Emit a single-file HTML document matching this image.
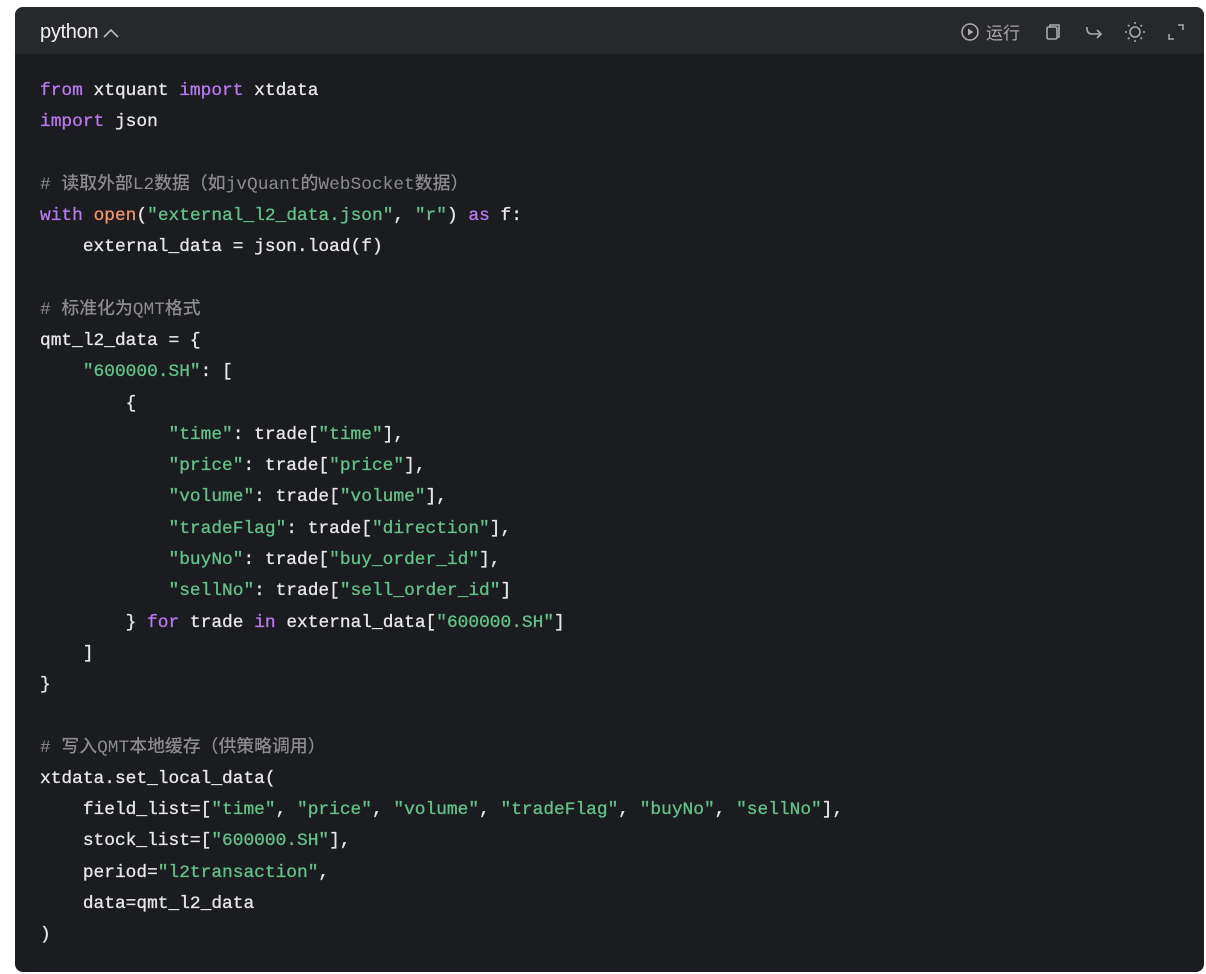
<!DOCTYPE html>
<html><head><meta charset="utf-8"><style>
body{margin:0;background:#fff;width:1206px;height:974px;overflow:hidden}
.box{position:absolute;left:15px;top:7px;width:1189px;height:965px;background:#1b1c20;border-radius:8px;overflow:hidden}
.hd{height:47px;background:#27282c;position:relative}
.lang{position:absolute;left:25px;top:14px;color:#f2f2f2;font:20px "Liberation Sans",sans-serif;letter-spacing:-0.3px}
.lang svg{vertical-align:middle;margin-left:4px}
.tools{position:absolute;right:18px;top:12px;display:flex;align-items:center;color:#a9a9a9;font:17px "Liberation Sans","Noto Sans CJK SC",sans-serif}
.tools svg{display:block}
pre{margin:0;position:absolute;left:25px;top:69px;font:17.85px/31.26px "Liberation Mono","Noto Sans CJK SC",monospace;color:#e8e8e8;font-weight:500;-webkit-text-stroke:0.3px currentColor}
.k{color:#b779f0}.s{color:#63c289}.c{color:#8c8c8c;-webkit-text-stroke:0}.f{color:#f0946c}
</style></head><body><div class="box">
<div class="hd"><div class="lang">python<svg width="18" height="12" viewBox="0 0 18 12"><path d="M2 10L9 3L16 10" fill="none" stroke="#bbb" stroke-width="1.6"/></svg></div>
<div class="tools">
<svg width="20" height="20" viewBox="0 0 20 20"><circle cx="10" cy="10" r="8" fill="none" stroke="#aaa" stroke-width="1.6"/><path d="M8 6.5L13.5 10L8 13.5Z" fill="#aaa"/></svg><span style="margin:0 24px 0 6px">运行</span>
<svg width="18" height="20" viewBox="0 0 18 20" style="margin-right:22px"><rect x="3" y="5" width="10" height="12" rx="1.5" fill="none" stroke="#aaa" stroke-width="1.6"/><path d="M6 5V3h9v12h-2" fill="none" stroke="#aaa" stroke-width="1.6"/></svg>
<svg width="20" height="20" viewBox="0 0 20 20" style="margin-right:20px"><path d="M3 5v2c0 3 2 5 5 5h9M13 8l4 4-4 4" fill="none" stroke="#aaa" stroke-width="1.6"/></svg>
<svg width="22" height="22" viewBox="0 0 22 22" style="margin-right:20px"><circle cx="11" cy="11" r="5" fill="none" stroke="#aaa" stroke-width="1.6"/><path d="M11 1v2M11 19v2M1 11h2M19 11h2M4 4l1.4 1.4M16.6 16.6L18 18M4 18l1.4-1.4M16.6 5.4L18 4" stroke="#aaa" stroke-width="1.6"/></svg>
<svg width="20" height="20" viewBox="0 0 20 20"><path d="M12 3h5v5M3 12v5h5" fill="none" stroke="#aaa" stroke-width="1.6"/></svg>
</div></div>
<pre><span class="k">from</span> xtquant <span class="k">import</span> xtdata
<span class="k">import</span> json

<span class="c"># 读取外部L2数据（如jvQuant的WebSocket数据）</span>
<span class="k">with</span> <span class="f">open</span>(<span class="s">"external_l2_data.json"</span>, <span class="s">"r"</span>) <span class="k">as</span> f:
    external_data = json.load(f)

<span class="c"># 标准化为QMT格式</span>
qmt_l2_data = {
    <span class="s">"600000.SH"</span>: [
        {
            <span class="s">"time"</span>: trade[<span class="s">"time"</span>],
            <span class="s">"price"</span>: trade[<span class="s">"price"</span>],
            <span class="s">"volume"</span>: trade[<span class="s">"volume"</span>],
            <span class="s">"tradeFlag"</span>: trade[<span class="s">"direction"</span>],
            <span class="s">"buyNo"</span>: trade[<span class="s">"buy_order_id"</span>],
            <span class="s">"sellNo"</span>: trade[<span class="s">"sell_order_id"</span>]
        } <span class="k">for</span> trade <span class="k">in</span> external_data[<span class="s">"600000.SH"</span>]
    ]
}

<span class="c"># 写入QMT本地缓存（供策略调用）</span>
xtdata.set_local_data(
    field_list=[<span class="s">"time"</span>, <span class="s">"price"</span>, <span class="s">"volume"</span>, <span class="s">"tradeFlag"</span>, <span class="s">"buyNo"</span>, <span class="s">"sellNo"</span>],
    stock_list=[<span class="s">"600000.SH"</span>],
    period=<span class="s">"l2transaction"</span>,
    data=qmt_l2_data
)</pre>
</div></body></html>
